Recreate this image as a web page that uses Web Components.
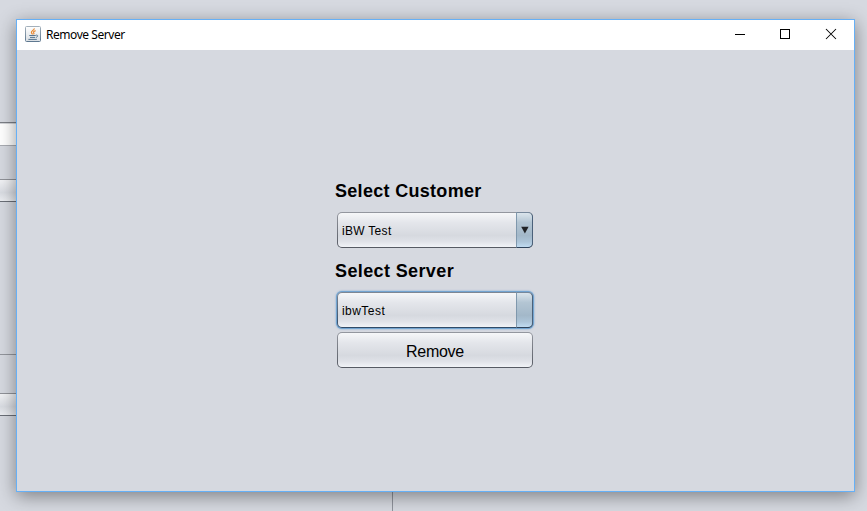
<!DOCTYPE html>
<html lang="en"><head><meta charset="utf-8"><title>Remove Server</title>
<style>html,body{margin:0;width:867px;height:511px;overflow:hidden;background:#d6d9e0}</style></head>
<body>
<app-desktop>
  <dialog-window>
    <title-bar slot="bar">Remove Server</title-bar>
    <server-form></server-form>
  </dialog-window>
</app-desktop>
<script>
const define = (name, html) => {
  const t = document.createElement('template');
  t.innerHTML = html;
  customElements.define(name, class extends HTMLElement {
    constructor(){ super(); this.attachShadow({mode:'open'}).append(t.content.cloneNode(true)); }
  });
};
define('back-frame', `<style>
:host{display:grid;width:867px;height:511px;box-sizing:border-box;grid-template-columns:392px 1fr;grid-template-rows:122px 24px 33px 23px 152px 1px 38px 23px 1fr}
.l{grid-column:1}.field{grid-row:2;box-sizing:border-box;background:#fff;border-top:1px solid #7c7f86;border-bottom:1px solid #a9acb2;box-shadow:inset 0 1px #d3d5d9}
.btn{box-sizing:border-box;border-top:1px solid #909298;border-bottom:1px solid #6b6f77;background:linear-gradient(#f2f3f5,#d9dce2 60%,#eceef2)}
.b1{grid-row:4}.b2{grid-row:8}.sep{grid-row:6;background:#92959c}
.v{grid-column:2;grid-row:9;border-left:1px solid #8f939c}
</style><div class="l field"></div><div class="l btn b1"></div><div class="l sep"></div><div class="l btn b2"></div><div class="v"></div>`);
define('app-desktop', `<style>
:host{display:block;position:relative;width:867px;height:511px;overflow:hidden;background:#d6d9e0}
::slotted(dialog-window){position:absolute;left:16px;top:19px}
</style><back-frame></back-frame><slot></slot>`);
define('dialog-window', `<style>
:host{display:flex;flex-direction:column;box-sizing:border-box;width:839px;height:473px;border:1px solid #66b0f6;background:#d6d9e0;box-shadow:0 4px 17px rgba(0,0,0,.42)}
main{flex:1;display:flex;flex-direction:column}
</style><slot name="bar"></slot><main><slot></slot></main>`);
define('java-icon', `<style>:host{display:block;width:16px;height:16px}svg{display:block}</style>
<svg width="16" height="16" viewBox="0 0 16 16"><defs><linearGradient id="g" x2="0" y2="1"><stop stop-color="#a3b0bb"/><stop offset="1" stop-color="#5e7890"/></linearGradient><linearGradient id="f" x2="0" y2="1"><stop stop-color="#fff"/><stop offset="1" stop-color="#d9dee3"/></linearGradient></defs>
<rect x=".5" y=".5" width="15" height="15" rx="1" fill="url(#f)" stroke="url(#g)"/>
<path d="M9.3 2.4C9.5 4.2 5.9 4.9 6.4 6.5 6.6 7.2 7.4 7.6 7.4 8.5M10.6 4.6C8.7 5.4 8.1 6 8.8 6.8 9.3 7.3 8.9 7.8 8.5 8.3" fill="none" stroke="#e8862e" stroke-width="1.2"/>
<path d="M4.3 9.5h6.4M5 11.4h5.2M3.4 13.4h8.4M10.8 9.2c2.6-.5 2.4 1.6.2 2.2" fill="none" stroke="#56748e" stroke-width="1"/></svg>`);
define('title-bar', `<style>
:host{display:flex;align-items:center;height:30px;box-sizing:border-box;padding-left:8px;background:#fff;color:#000;font:12px/16px "Noto Sans","Open Sans",sans-serif}
java-icon{margin:0 5px 2px 0}
span{flex:1;white-space:nowrap;letter-spacing:-.45px}
nav{display:flex;margin-right:-1px}svg{display:block}
</style><java-icon></java-icon><span><slot></slot></span><nav>
<svg width="46" height="30" shape-rendering="crispEdges"><path d="M18 14h10v1H18z"/></svg>
<svg width="46" height="30" shape-rendering="crispEdges"><path d="M17.5 9.5h9v9h-9z" fill="none" stroke="#000"/></svg>
<svg width="46" height="30"><path d="M17 9l10 10M27 9L17 19" stroke="#000" stroke-width="1.05"/></svg></nav>`);
define('form-label', `<style>:host{display:block;height:24px;font:bold 18px/24px "Liberation Sans",Arial,sans-serif;letter-spacing:.3px;color:#000;white-space:nowrap}</style><slot></slot>`);
define('combo-box', `<style>
:host{display:flex;width:196px;height:36px;box-sizing:border-box;margin-left:2px;padding:1px;border-radius:5px;background:linear-gradient(#94979f,#555962);font:12px/34px "Liberation Sans",Arial,sans-serif;letter-spacing:.3px;color:#000}
:host([focused]){letter-spacing:.45px;box-shadow:0 0 0 1px #73a4d1,0 0 2px 1px #73a4d1;background:linear-gradient(#7e8794,#2f4a67)}
.v{flex:1;padding:1px 0 0 4px;height:34px;box-sizing:border-box;white-space:nowrap;border-radius:4px 0 0 4px;background:linear-gradient(#f6f7f9,#e4e6eb 28%,#d6d9df 66%,#dfe1e7 83%,#f1f3f7)}
.a{width:17px;margin:-1px -1px -1px 0;height:36px;box-sizing:border-box;border:1px solid;border-color:#76889b #4b617a #2e435b #7f98ad;border-radius:0 5px 5px 0;background:linear-gradient(#dbe5ec,#b3c5d3 28%,#a3b8c9 66%,#adc5d9 85%,#c0dbf1);display:flex;align-items:center;justify-content:center}
svg{display:block}:host([focused]) svg{display:none}
</style><div class="v"><slot></slot></div><div class="a"><svg width="8" height="8"><path d="M.2 .8h7.4L3.9 7.6z" fill="#202225"/></svg></div>`);
define('push-button', `<style>
:host{display:block;width:196px;height:36px;box-sizing:border-box;margin-left:2px;padding:1px;border-radius:5px;background:linear-gradient(#94979f,#555962);font:16px/37px "Liberation Sans",Arial,sans-serif;letter-spacing:-.3px;color:#000}
div{height:34px;text-align:center;border-radius:4px;background:linear-gradient(#f6f7f9,#e4e6eb 28%,#d6d9df 66%,#dfe1e7 83%,#f1f3f7)}
</style><div><slot></slot></div>`);
define('server-form', `<style>
:host{display:flex;flex-direction:column;width:198px;padding:129px 0 0 318px}
combo-box{margin-top:9px}.second{margin-top:11px;letter-spacing:.38px}push-button{margin-top:4px}
</style><form-label>Select Customer</form-label><combo-box>iBW Test</combo-box>
<form-label class="second">Select Server</form-label><combo-box focused>ibwTest</combo-box><push-button>Remove</push-button>`);
</script>
</body></html>
